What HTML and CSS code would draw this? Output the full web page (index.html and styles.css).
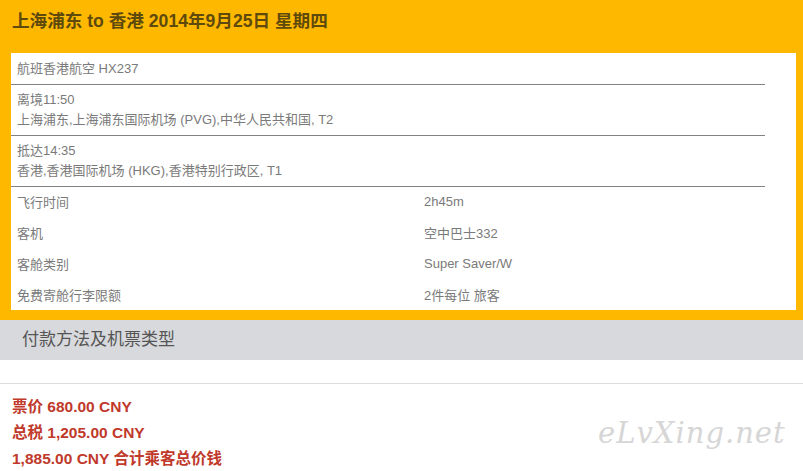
FILE: index.html
```html
<!DOCTYPE html>
<html lang="zh-CN">
<head>
<meta charset="utf-8">
<title>航班详情</title>
<link rel="stylesheet" href="styles.css">
</head>
<body>
<div class="top">
  <h1 class="title">上海浦东 to 香港 2014年9月25日 星期四</h1>
  <div class="panel">
    <div class="row single">航班香港航空 HX237</div>
    <div class="row double">
      <div>离境11:50</div>
      <div>上海浦东,上海浦东国际机场 (PVG),中华人民共和国, T2</div>
    </div>
    <div class="row double">
      <div>抵达14:35</div>
      <div>香港,香港国际机场 (HKG),香港特别行政区, T1</div>
    </div>
    <div class="grid">
      <div class="cell">飞行时间</div><div class="cell">2h45m</div>
      <div class="cell">客机</div><div class="cell">空中巴士332</div>
      <div class="cell">客舱类别</div><div class="cell">Super Saver/W</div>
      <div class="cell">免费寄舱行李限额</div><div class="cell">2件每位 旅客</div>
    </div>
  </div>
</div>
<div class="section">付款方法及机票类型</div>
<div class="prices">
  <div>票价 680.00 CNY</div>
  <div>总税 1,205.00 CNY</div>
  <div>1,885.00 CNY 合计乘客总价钱</div>
  <span class="mark">eLvXing.net</span>
</div>
</body>
</html>
```
FILE: styles.css
```css
html, body {
  margin: 0;
  padding: 0;
  background: #fff;
  font-family: "Liberation Sans", Arial, "Noto Sans CJK SC", sans-serif;
}
.top {
  background: #FFB800;
  padding: 0 7px 10px 11px;
}
.title {
  margin: 0;
  height: 53px;
  box-sizing: border-box;
  padding: 11px 0 0 1px;
  font-size: 17.6px;
  line-height: 20px;
  font-weight: bold;
  color: #5e4a0c;
}
.panel {
  background: #fff;
  padding-left: 6px;
  font-size: 13px;
  color: #7a7a7a;
}
.row {
  margin-left: -6px;
  padding-left: 6px;
  margin-right: 31px;
  border-bottom: 1px solid #828282;
}
.single {
  padding-top: 7px;
  padding-bottom: 7px;
  line-height: 17px;
}
.double {
  padding-top: 5px;
  padding-bottom: 5px;
  line-height: 20px;
}
.grid {
  display: grid;
  grid-template-columns: 407px 1fr;
  grid-auto-rows: 30.75px;
}
.cell {
  display: flex;
  align-items: center;
  padding-bottom: 1px;
}
.section {
  background: #D8D9DD;
  height: 40px;
  line-height: 40px;
  padding-left: 22px;
  font-size: 17px;
  color: #555;
  border-bottom: 23px solid #fff;
}
.prices {
  position: relative;
  border-top: 1px solid #dcdcdc;
  padding: 10px 0 0 12px;
  height: 77px;
  font-size: 15.5px;
  line-height: 26px;
  font-weight: bold;
  color: #c0392b;
}
.mark {
  position: absolute;
  left: 598px;
  top: 32px;
  font-family: "DejaVu Serif", serif;
  font-style: italic;
  font-weight: normal;
  font-size: 29px;
  line-height: 34px;
  color: #d6d6d6;
  letter-spacing: 1px;
}
```
